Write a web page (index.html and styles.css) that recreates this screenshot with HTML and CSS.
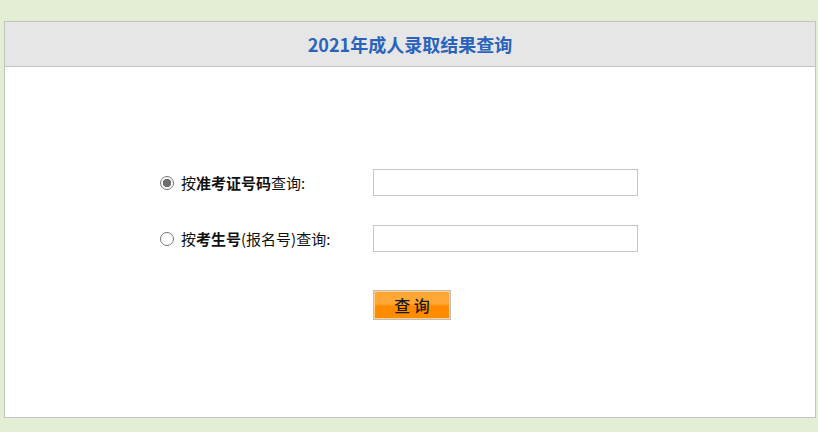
FILE: index.html
```html
<!DOCTYPE html>
<html lang="zh-CN">
<head>
  <meta charset="UTF-8" />
  <title>2021年成人录取结果查询</title>
  <link rel="stylesheet" href="styles.css">
</head>
<body>
  <div class="panel">
    <div class="panel-head">2021年成人录取结果查询</div>
    <form class="query">
      <label class="query-label">
        <input type="radio" name="mode" checked>
        <span>按<b>准考证号码</b>查询:</span>
      </label>
      <input type="text" class="query-input">

      <label class="query-label">
        <input type="radio" name="mode">
        <span>按<b>考生号</b>(报名号)查询:</span>
      </label>
      <input type="text" class="query-input">

      <span></span>
      <button type="button" class="query-btn">查&nbsp;询</button>
    </form>
  </div>
</body>
</html>
```

FILE: styles.css
```css
body {
  margin: 0;
  padding: 21px 2px 14px 4px;
  background: #e4eed4;
  font-family: "Noto Sans CJK SC", "Noto Sans", sans-serif;
  color: #111;
}

.panel {
  background: #fff;
  border: 1px solid #c3c3c3;
  height: 397px;
  box-sizing: border-box;
}

.panel-head {
  height: 44px;
  line-height: 44px;
  background: #e6e6e6;
  border-bottom: 1px solid #c3c3c3;
  text-align: center;
  font-size: 18px;
  font-weight: bold;
  color: #2a63bb;
}

.query {
  display: grid;
  grid-template-columns: 213px 265px;
  row-gap: 29px;
  align-items: center;
  padding: 102px 0 0 155px;
}

.query-label {
  display: flex;
  align-items: center;
  font-size: 15px;
}

.query-label b {
  font-weight: bold;
}

.query-label input {
  appearance: none;
  width: 14px;
  height: 14px;
  margin: 0 7px 0 0;
  border: 1px solid #767676;
  border-radius: 50%;
  box-sizing: border-box;
  background: #fff;
}

.query-label input:checked {
  background: radial-gradient(circle, #6e6e6e 0 4px, #fff 4.5px);
}

.query-input {
  width: 265px;
  height: 27px;
  box-sizing: border-box;
  border: 1px solid #c6c6c6;
  margin: 0;
}

.query-btn {
  justify-self: start;
  margin-top: 9px;
  width: 78px;
  height: 30px;
  border: 1px solid #bdbdbd;
  box-shadow: inset 0 0 0 1px #ffcf8c;
  background: linear-gradient(#ffa634 0, #ffa634 45%, #ff8b00 55%, #ff8b00 100%);
  font-family: "Noto Sans CJK SC", sans-serif;
  font-size: 16px;
  font-weight: 500;
  color: #1a1a1a;
  padding: 0;
}
```
